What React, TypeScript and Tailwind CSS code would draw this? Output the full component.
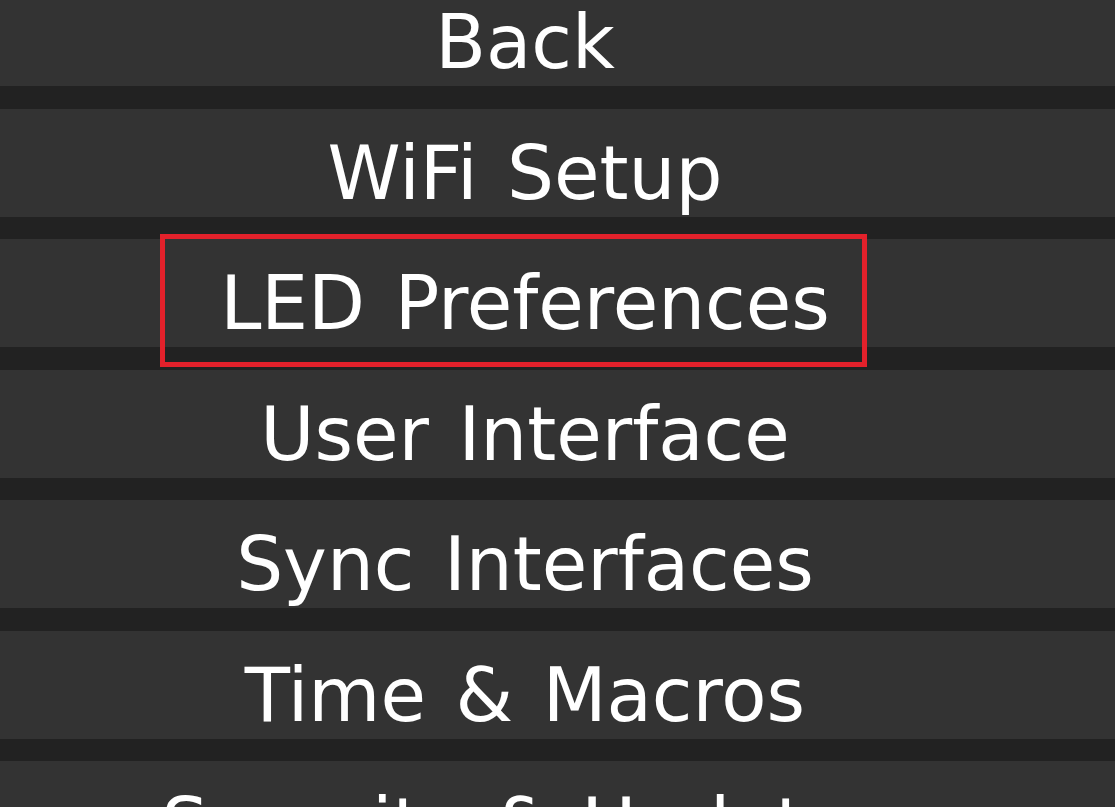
import React from "react";

const items = [
  "Back",
  "WiFi Setup",
  "LED Preferences",
  "User Interface",
  "Sync Interfaces",
  "Time & Macros",
  "Security & Updates",
];

const App = () => {
  return (
    <div className="relative w-full h-[807px] overflow-hidden bg-[#222222] font-['DejaVu_Sans',sans-serif]">
      <div className="flex flex-col gap-[22.5px] -mt-[22px]">
        {items.map((label) => (
          <button
            key={label}
            className="h-[108px] w-full flex-shrink-0 bg-[#333333] text-white text-[74px] leading-none [word-spacing:6px] flex items-center justify-center pt-[20px] pr-[65px] whitespace-nowrap"
          >
            {label}
          </button>
        ))}
      </div>
      <div className="absolute left-[160px] top-[234px] w-[707px] h-[133px] border-[5px] border-[#e3212b] pointer-events-none" />
    </div>
  );
};

export default App;
